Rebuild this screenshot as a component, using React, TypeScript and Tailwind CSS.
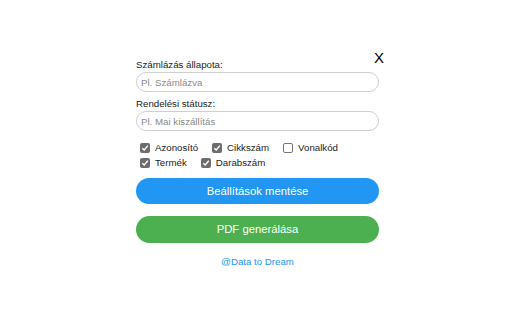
import React from 'react';

function Check({ label, checked = false }: { label: string; checked?: boolean }) {
  return (
    <label className="flex items-center gap-[5px]">
      {checked ? (
        <span className="flex h-[10px] w-[10px] items-center justify-center rounded-[2px] bg-[#6d6d6d]">
          <svg width="8" height="8" viewBox="0 0 8 8">
            <path d="M1.3 4.2 L3.2 6 L6.8 1.8" fill="none" stroke="#fff" strokeWidth="1.4" />
          </svg>
        </span>
      ) : (
        <span className="h-[10px] w-[10px] rounded-[2px] border border-[#767676] bg-white" />
      )}
      <span>{label}</span>
    </label>
  );
}

export default function App() {
  return (
    <div className="relative h-[320px] w-[512px] bg-white font-['Liberation_Sans',Arial,sans-serif] text-[9.7px] leading-[13px] text-[#222]">
      <button className="absolute left-[374px] top-[49px] text-[15px] leading-[18px] text-black">X</button>
      <div className="ml-[136px] w-[243px] pt-[58px]">
        <div className="mb-[1px]">Számlázás állapota:</div>
        <div className="flex h-[20px] items-center rounded-full border border-[#cfcfcf] px-[4px] text-[#8a8a8a]">Pl. Számlázva</div>
        <div className="mb-[1px] mt-[5px]">Rendelési státusz:</div>
        <div className="flex h-[20px] items-center rounded-full border border-[#cfcfcf] px-[4px] text-[#8a8a8a]">Pl. Mai kiszállítás</div>
        <div className="mt-[10px] flex flex-wrap gap-x-[14px] gap-y-[2px] pl-[4px]">
          <Check label="Azonosító" checked />
          <Check label="Cikkszám" checked />
          <Check label="Vonalkód" />
          <Check label="Termék" checked />
          <Check label="Darabszám" checked />
        </div>
        <button className="mt-[9px] flex h-[26px] w-full items-center justify-center rounded-full bg-[#2196f3] text-[11.3px] text-white">
          Beállítások mentése
        </button>
        <button className="mt-[12px] flex h-[27px] w-full items-center justify-center rounded-full bg-[#4caf50] text-[11.3px] text-white">
          PDF generálása
        </button>
        <div className="mt-[12px] text-center text-[#2196f3]">@Data to Dream</div>
      </div>
    </div>
  );
}
